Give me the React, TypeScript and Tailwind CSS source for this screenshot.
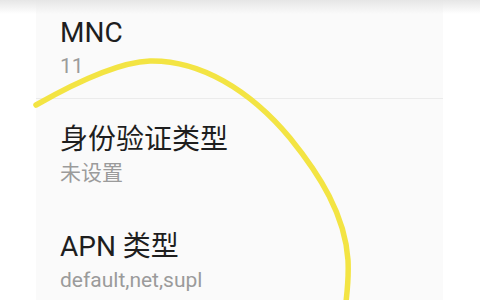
import React from "react";

const rows = [
  { title: "MNC", sub: "11", divider: true },
  { title: "身份验证类型", sub: "未设置", divider: false },
  { title: "APN 类型", sub: "default,net,supl", divider: false },
];

export default function App() {
  return (
    <div
      className="relative w-[480px] h-[300px] overflow-hidden bg-white"
      style={{ fontFamily: 'Roboto, "Noto Sans CJK SC", sans-serif' }}
    >
      <div className="ml-[36px] w-[407px] h-[330px] bg-[#fafafa] mt-[-8px]">
        {rows.map((r) => (
          <div
            key={r.title}
            className={
              "h-[107px] pl-[24px] pt-[22px] flex flex-col " +
              (r.divider ? "border-b border-[#ebebeb]" : "")
            }
          >
            <div className="text-[28px] leading-[37px] text-[#1e1e1e]">{r.title}</div>
            <div className="text-[21px] leading-[26px] text-[#9b9b9b] mt-[2px]">{r.sub}</div>
          </div>
        ))}
      </div>
      <div className="absolute left-0 top-0 w-full h-[14px] bg-gradient-to-b from-[#e6e6e6] to-transparent" />
      <svg className="absolute left-0 top-0" width="480" height="300" viewBox="0 0 480 300">
        <path
          d="M36,105 C80,80 120,62 150,61 C200,60 250,90 290,138 C320,175 345,215 348,260 C349,280 347,295 345,310"
          fill="none"
          stroke="#f3e443"
          strokeWidth="5.5"
          strokeLinecap="round"
        />
      </svg>
    </div>
  );
}
